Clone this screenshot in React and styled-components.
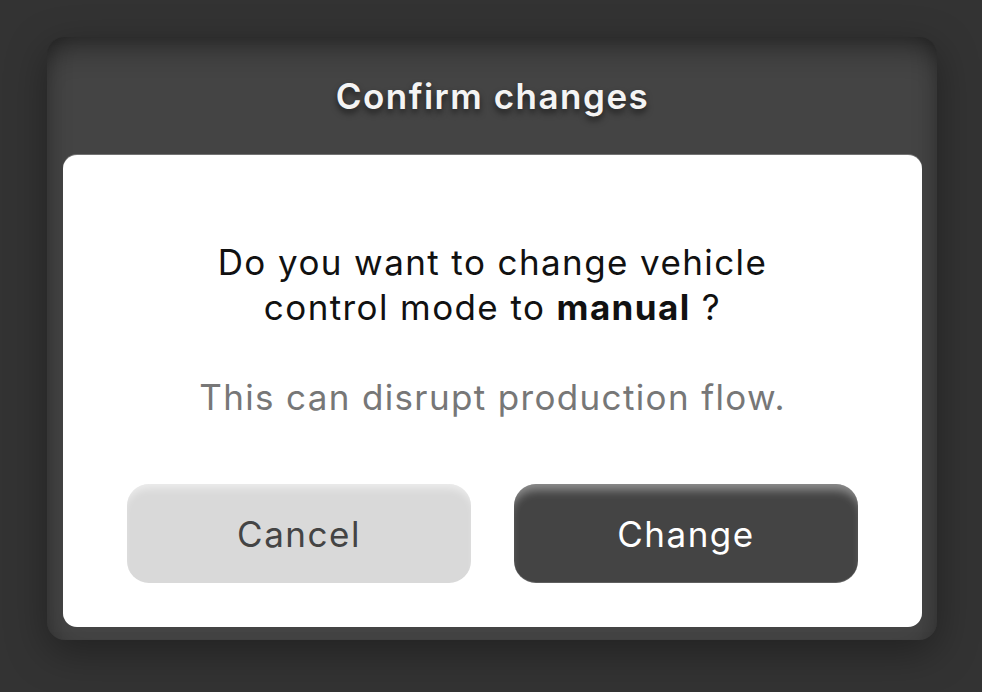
import React from 'react'
import styled, { createGlobalStyle } from 'styled-components'

const GlobalStyle = createGlobalStyle`
  html, body {
    margin: 0;
    padding: 0;
    background: #333333;
  }
  body {
    font-family: Inter, "Noto Sans", sans-serif;
  }
`

const Page = styled.div`
  width: 982px;
  height: 692px;
  box-sizing: border-box;
  padding: 37px 45px 0 47px;
  background: #333333;
`

const Dialog = styled.div`
  width: 890px;
  height: 603px;
  box-sizing: border-box;
  display: flex;
  flex-direction: column;
  padding: 0 15px 13px 16px;
  border-radius: 18px;
  background: #444444;
  box-shadow: 0 12px 40px rgba(0, 0, 0, 0.35), inset 0 26px 30px -18px rgba(0, 0, 0, 0.45),
    inset 18px 0 24px -18px rgba(0, 0, 0, 0.3), inset -18px 0 24px -18px rgba(0, 0, 0, 0.3);
`

const Header = styled.div`
  height: 118px;
  display: flex;
  align-items: center;
  justify-content: center;
`

const Title = styled.h1`
  margin: 0;
  font-size: 35px;
  font-weight: 600;
  letter-spacing: 1.5px;
  color: #f4f4f4;
  text-shadow: 0 4px 6px rgba(0, 0, 0, 0.55);
`

const Card = styled.div`
  flex: 1;
  display: flex;
  flex-direction: column;
  align-items: center;
  padding: 85px 64px 44px 64px;
  background: #ffffff;
  border-radius: 14px;
  box-shadow: 0 -1px 0 rgba(255, 255, 255, 0.25);
`

const Question = styled.p`
  margin: 0;
  font-size: 35px;
  line-height: 45px;
  letter-spacing: 1.4px;
  color: #111111;
  text-align: center;

  b {
    font-weight: 700;
  }
`

const Note = styled.p`
  margin: 45px 0 0;
  font-size: 35px;
  line-height: 45px;
  letter-spacing: 1.35px;
  color: #777777;
  text-align: center;
`

const Actions = styled.div`
  margin-top: auto;
  width: 100%;
  display: grid;
  grid-template-columns: 1fr 1fr;
  gap: 43px;
`

const Button = styled.button`
  height: 99px;
  border: none;
  border-radius: 22px;
  font-family: inherit;
  font-size: 35px;
  font-weight: 400;
  letter-spacing: 1.5px;
  cursor: pointer;
  background: ${p => (p.$primary ? '#444444' : '#d9d9d9')};
  color: ${p => (p.$primary ? '#ffffff' : '#444444')};
  box-shadow: ${p =>
    p.$primary
      ? 'inset 0 10px 10px -4px rgba(255, 255, 255, 0.4), inset 0 -1px 0 rgba(255,255,255,0.15)'
      : 'inset 0 8px 8px -4px rgba(255, 255, 255, 0.55)'};
`

export default function App() {
  return (
    <>
      <GlobalStyle />
      <Page>
        <Dialog>
          <Header>
            <Title>Confirm changes</Title>
          </Header>
          <Card>
            <Question>
              Do you want to change vehicle
              <br />
              control mode to <b>manual</b> ?
            </Question>
            <Note>This can disrupt production flow.</Note>
            <Actions>
              <Button>Cancel</Button>
              <Button $primary>Change</Button>
            </Actions>
          </Card>
        </Dialog>
      </Page>
    </>
  )
}
